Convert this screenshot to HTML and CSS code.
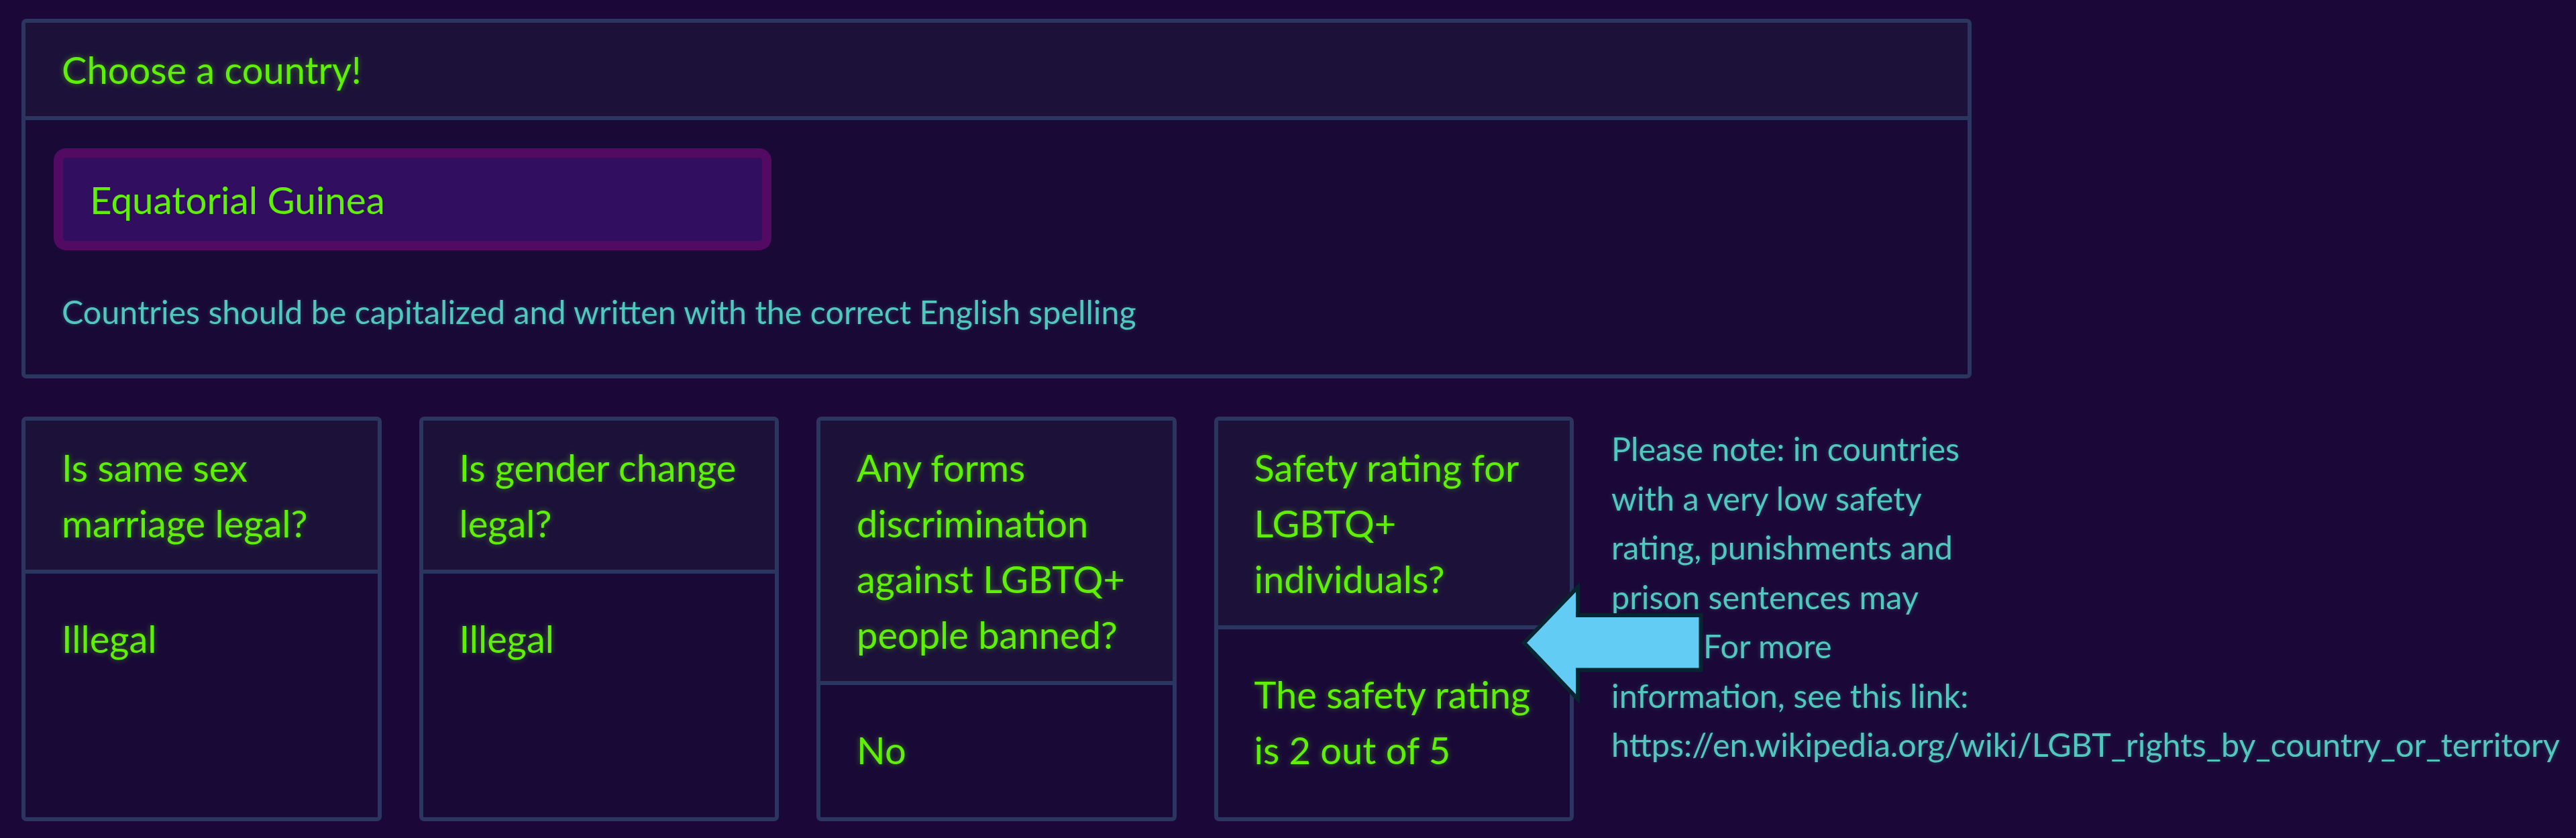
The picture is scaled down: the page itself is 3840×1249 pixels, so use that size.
FILE: index.html
```html
<!DOCTYPE html>
<html lang="en">
<head>
<meta charset="utf-8">
<title>LGBTQ+ rights by country</title>
<link rel="stylesheet" href="styles.css">
</head>
<body>
<main class="page">
  <section class="panel">
    <header class="panel-header">Choose a country!</header>
    <div class="panel-body">
      <input class="country-input" type="text" value="Equatorial Guinea">
      <p class="hint">Countries should be capitalized and written with the correct English spelling</p>
    </div>
  </section>

  <div class="cards">
    <section class="card">
      <div class="card-header">Is same sex marriage legal?</div>
      <div class="card-body">Illegal</div>
    </section>
    <section class="card">
      <div class="card-header">Is gender change legal?</div>
      <div class="card-body">Illegal</div>
    </section>
    <section class="card">
      <div class="card-header">Any forms discrimination against LGBTQ+ people banned?</div>
      <div class="card-body">No</div>
    </section>
    <section class="card">
      <div class="card-header">Safety rating for LGBTQ+ individuals?</div>
      <div class="card-body">The safety rating is 2 out of 5</div>
    </section>
    <p class="note">Please note: in countries with a very low safety rating, punishments and prison sentences may apply. For more information, see this link: https://en.wikipedia.org/wiki/LGBT_rights_by_country_or_territory</p>
    <svg class="arrow" width="276" height="178" viewBox="0 0 276 178" aria-hidden="true">
      <polygon points="6,88 86,5 86,47 269.5,47 269.5,128.5 86,128.5 86,172" fill="#62ccf4" stroke="#072530" stroke-width="6" stroke-linejoin="miter"/>
    </svg>
  </div>
</main>
</body>
</html>
```

FILE: styles.css
```css
html, body {
  margin: 0;
  padding: 0;
  background: #1b0838;
}

body {
  font-family: Lato, "Open Sans", "Liberation Sans", sans-serif;
  font-size: 48px;
  line-height: 72px;
  color: #50c8be;
  min-height: 1249px;
}

.page {
  padding: 28px 0 0 32px;
}

.panel {
  width: 2907px;
  box-sizing: border-box;
  border: 6px solid #2a3660;
  border-radius: 7px;
  background: #190937;
  overflow: hidden;
}

.panel-header {
  background: #1c1139;
  border-bottom: 6px solid #2a3660;
  padding: 28px 54px;
  font-size: 56px;
  line-height: 83px;
  color: #5ff005;
  text-shadow: 0 0 8px rgba(95, 240, 5, 0.45);
}

.panel-body {
  padding: 54px 54px 58px;
}

.country-input {
  display: block;
  width: 1046px;
  height: 128px;
  box-sizing: border-box;
  margin: 0;
  padding: 0 40px;
  border: 2px solid #520a63;
  border-radius: 7px;
  box-shadow: 0 0 0 12px #520a63;
  background: #320e60;
  color: #5ff005;
  font-family: inherit;
  font-size: 56.5px;
  outline: none;
}

.hint {
  margin: 67px 0 0;
  font-size: 48.4px;
  line-height: 72px;
  text-shadow: 0 0 6px rgba(80, 200, 190, 0.3);
}

.cards {
  position: relative;
  display: flex;
  align-items: stretch;
  gap: 56px;
  margin-top: 57px;
}

.card {
  flex: 0 0 536.5px;
  box-sizing: border-box;
  min-height: 603px;
  display: flex;
  flex-direction: column;
  border: 6px solid #2a3660;
  border-radius: 7px;
  background: #190937;
  overflow: hidden;
  color: #5ff005;
  font-size: 56px;
  line-height: 83px;
  text-shadow: 0 0 8px rgba(95, 240, 5, 0.45);
}

.card-header {
  background: #1c1139;
  border-bottom: 6px solid #2a3660;
  padding: 28px 40px 28px 54px;
}

.card-body {
  flex: 1 1 auto;
  padding: 55px 40px 55px 54px;
}

.note {
  flex: 0 0 540px;
  min-width: 0;
  margin: 11px 0 0;
  font-size: 48.5px;
  line-height: 73.5px;
  text-shadow: 0 0 6px rgba(80, 200, 190, 0.3);
}

.arrow {
  position: absolute;
  left: 2234px;
  top: 249px;
  overflow: visible;
}
```
